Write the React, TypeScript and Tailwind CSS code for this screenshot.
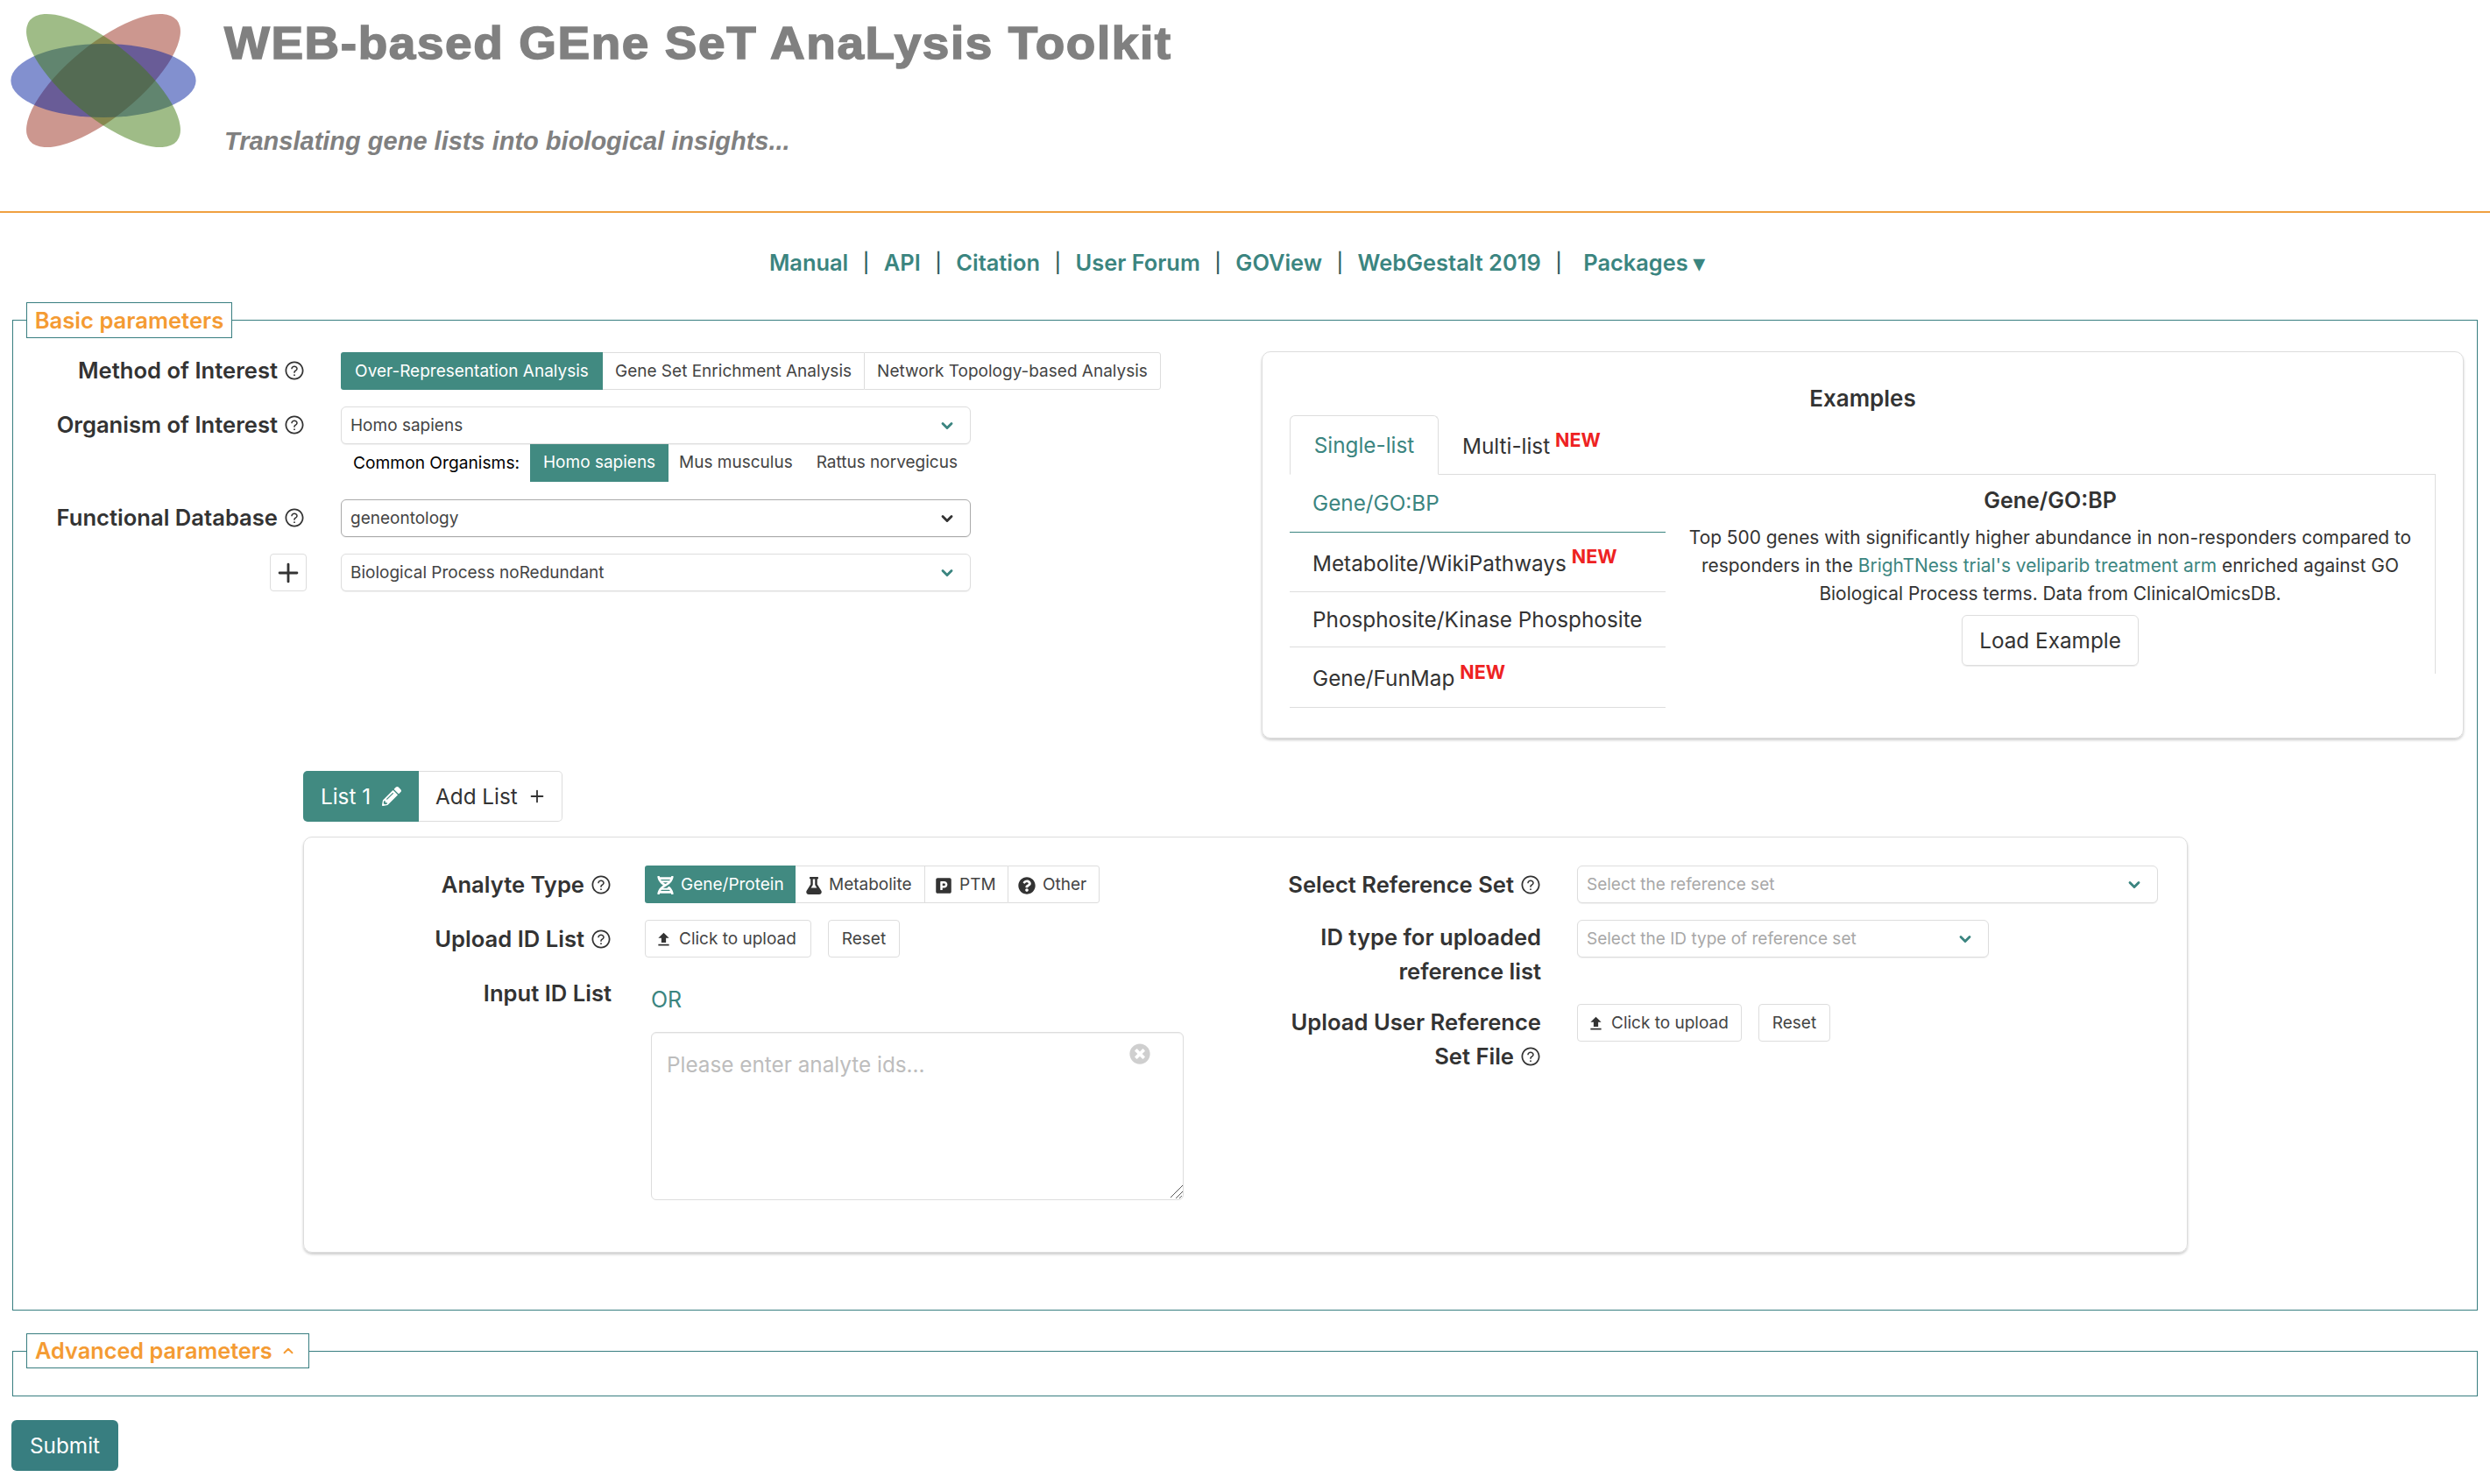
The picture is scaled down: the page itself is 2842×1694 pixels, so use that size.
import React from 'react';
import { ChevronDown, ChevronUp, Plus } from 'lucide-react';
import { AiOutlineQuestionCircle } from 'react-icons/ai';
import { FaDna, FaFlask, FaParking, FaQuestionCircle, FaPencilAlt, FaTimesCircle } from 'react-icons/fa';
import { MdFileUpload } from 'react-icons/md';

const Help = () => <AiOutlineQuestionCircle className="inline-block shrink-0 w-[24px] h-[24px] text-[#333] ml-[7px]" />;

const New = () => <sup className="text-[21.5px] font-bold text-[#ee2222] ml-[6px] relative top-[-7px] leading-none align-baseline">NEW</sup>;

const Select = ({ text, className, placeholder, dark }: { text: string; className: string; placeholder?: boolean; dark?: boolean }) => (
  <div className={`h-[43px] flex items-center justify-between pl-[10px] pr-[16px] bg-white border rounded-[6px] text-[19px] shadow-[0_1px_1px_rgba(0,0,0,0.06)] ${dark ? 'border-[#aaaaaa]' : 'border-[#dddddd]'} ${placeholder ? 'text-[#a8a8a8]' : 'text-[#444]'} ${className}`}>
    <span className="pt-[2px]">{text}</span>
    <ChevronDown size={20} strokeWidth={3.4} className={dark ? 'text-[#333]' : 'text-[#3b8580]'} />
  </div>
);

const UploadRow = ({ clickWidth }: { clickWidth: string }) => (
  <div className="flex gap-[19px]">
    <button className={`h-[43px] ${clickWidth} pt-[2px] pl-[10px] flex items-center gap-[7px] border border-[#dddddd] rounded-[4px] text-[19px] text-[#444]`}>
      <MdFileUpload size={21} className="text-[#333]" />
      Click to upload
    </button>
    <button className="h-[43px] w-[82px] pt-[2px] border border-[#dddddd] rounded-[4px] text-[19px] text-[#444]">Reset</button>
  </div>
);

const FormLabel = ({ children, className }: { children: React.ReactNode; className: string }) => (
  <div className={`text-[25.6px] font-semibold text-[#333] text-right leading-[39px] ${className}`}>{children}</div>
);

const Logo = () => (
  <svg width="240" height="190" viewBox="0 0 240 190" className="shrink-0">
    <ellipse cx="118" cy="92" rx="108.6" ry="41.5" transform="rotate(-39.4 118 92)" fill="#9a3020" fillOpacity="0.5" />
    <ellipse cx="118" cy="92" rx="105.6" ry="42" fill="#0522a0" fillOpacity="0.5" />
    <ellipse cx="118" cy="92" rx="108.6" ry="41.5" transform="rotate(39.4 118 92)" fill="#3f7a10" fillOpacity="0.5" />
  </svg>
);

const NAV = ['Manual', 'API', 'Citation', 'User Forum', 'GOView', 'WebGestalt 2019'];

const MENU: { name: string; isNew?: boolean; h: string }[] = [
  { name: 'Gene/GO:BP', h: 'h-[66px]' },
  { name: 'Metabolite/WikiPathways', isNew: true, h: 'h-[68px]' },
  { name: 'Phosphosite/Kinase Phosphosite', h: 'h-[63px]' },
  { name: 'Gene/FunMap', isNew: true, h: 'h-[69px]' },
];

export default function App() {
  return (
    <div className="w-[2842px] min-h-[1694px] bg-white text-[#333]" style={{ fontFamily: 'Inter, "Noto Sans", sans-serif' }}>
      <header className="h-[243px] flex items-start border-b-2 border-[#f0a040] overflow-hidden">
        <Logo />
        <div className="ml-[16px] text-[#808080]" style={{ fontFamily: '"Liberation Sans", Arial, sans-serif' }}>
          <h1 className="text-[52px] font-bold leading-[60px] mt-[19px] tracking-[1.5px] origin-left scale-x-[1.056] whitespace-nowrap [-webkit-text-stroke:1.5px_#808080]">WEB-based GEne SeT AnaLysis Toolkit</h1>
          <p className="text-[29px] font-bold italic leading-[34px] mt-[65px]">Translating gene lists into biological insights...</p>
        </div>
      </header>

      <nav className="h-[102px] pt-[12px] pr-[18px] flex items-center justify-center gap-[16.5px] text-[25.4px] font-semibold text-[#3b8580]">
        {NAV.map((n) => (
          <React.Fragment key={n}>
            <a>{n}</a>
            <span className="text-[22px] text-[#2f5f5f] font-medium">|</span>
          </React.Fragment>
        ))}
        <a className="ml-[8px]">Packages ▾</a>
      </nav>

      <fieldset className="mx-[14px] border border-[#387e80] pb-[65px]">
        <legend className="ml-[15px] h-[41px] w-[235px] border border-[#387e80] flex items-center justify-center text-[25.6px] font-semibold text-[#f49b33] leading-none">Basic parameters</legend>

        <div className="flex mt-[16px]">
          <div className="flex-1">
            <div className="flex">
              <FormLabel className="w-[333px] flex items-center justify-end h-[43px] pb-[2px]">Method of Interest<Help /></FormLabel>
              <div className="ml-[41px] flex h-[43px] text-[19px]">
                <div className="w-[299px] pt-[2px] bg-[#418a81] text-white flex items-center justify-center rounded-l-[3px]">Over-Representation Analysis</div>
                <div className="w-[298px] pt-[2px] border-y border-[#dddddd] text-[#444] flex items-center justify-center">Gene Set Enrichment Analysis</div>
                <div className="w-[339px] pt-[2px] border border-[#dddddd] text-[#444] flex items-center justify-center rounded-r-[3px]">Network Topology-based Analysis</div>
              </div>
            </div>

            <div className="flex mt-[19px]">
              <FormLabel className="w-[333px] flex items-center justify-end h-[43px] pb-[2px]">Organism of Interest<Help /></FormLabel>
              <div className="ml-[41px]">
                <Select text="Homo sapiens" className="w-[719px]" />
                <div className="flex items-center h-[43px] text-[19px]">
                  <span className="ml-[14px] text-[19.2px] text-black">Common Organisms:</span>
                  <span className="ml-[12px] w-[158px] h-full bg-[#418a81] text-white flex items-center justify-center">Homo sapiens</span>
                  <span className="ml-[12px] text-[#444]">Mus musculus</span>
                  <span className="ml-[27px] text-[#444]">Rattus norvegicus</span>
                </div>
              </div>
            </div>

            <div className="flex mt-[20px]">
              <FormLabel className="w-[333px] flex items-center justify-end h-[43px] pb-[2px]">Functional Database<Help /></FormLabel>
              <Select dark text="geneontology" className="ml-[41px] w-[719px]" />
            </div>

            <div className="flex mt-[19px]">
              <div className="w-[333px] flex justify-end">
                <button className="w-[42px] h-[43px] -mr-[2px] border border-[#dddddd] rounded-[4px] flex items-center justify-center">
                  <Plus size={34} strokeWidth={2} className="text-[#333]" />
                </button>
              </div>
              <Select text="Biological Process noRedundant" className="ml-[41px] w-[719px]" />
            </div>
          </div>

          <div className="w-[1372px] h-[442px] mr-[15px] -mt-px border border-[#dddddd] rounded-[10px] shadow-[0_2px_3px_rgba(0,0,0,0.2)] px-[31px]">
            <div className="h-[72px] flex items-end justify-center text-[26px] font-semibold text-[#333]">Examples</div>
            <div className="flex h-[68px] border-b border-[#dddddd] text-[24.3px]">
              <div className="w-[170px] h-[68px] border border-[#dddddd] border-b-white rounded-t-[6px] bg-white flex items-center justify-center text-[#3b8580]">Single-list</div>
              <div className="ml-[27px] flex items-center pt-[4px] text-[#333]">Multi-list<New /></div>
            </div>
            <div className="flex items-start">
              <div className="w-[429px] shrink-0">
                {MENU.map((m, i) => (
                  <div key={m.name} className={`${m.h} flex items-center pl-[26px] text-[24.3px] border-b ${i === 0 ? 'border-[#3b8580] text-[#3b8580]' : 'border-[#dddddd] text-[#333]'} ${m.isNew ? 'pt-[3px]' : ''}`}>
                    {m.name}
                    {m.isNew && <New />}
                  </div>
                ))}
              </div>
              <div className="flex-1 h-[227px] border-r border-[#dddddd] text-center px-[24px]">
                <div className="text-[25px] font-semibold text-[#333] mt-[12px] leading-[34px]">Gene/GO:BP</div>
                <p className="text-[20.9px] leading-[32px] text-[#333] mt-[10px]">
                  Top 500 genes with significantly higher abundance in non-responders compared to responders in the{' '}
                  <a className="text-[#3b8580]">BrighTNess trial's veliparib treatment arm</a> enriched against GO Biological Process terms. Data from ClinicalOmicsDB.
                </p>
                <button className="mt-[8px] w-[202px] h-[58px] border border-[#dddddd] rounded-[6px] text-[24.3px] text-[#333] shadow-[0_1px_1px_rgba(0,0,0,0.08)]">Load Example</button>
              </div>
            </div>
          </div>
        </div>

        <div className="ml-[331px] mr-[330px] mt-[37px]">
          <div className="flex h-[58px] text-[24.3px]">
            <div className="w-[132px] bg-[#418a81] text-white rounded-l-[5px] flex items-center pl-[20px] gap-[13px]">List 1 <FaPencilAlt size={22} /></div>
            <div className="w-[164px] border border-l-0 border-[#dddddd] rounded-r-[5px] flex items-center pl-[19px] gap-[11px] text-[#333]">Add List <Plus size={22} strokeWidth={2} /></div>
          </div>

          <div className="mt-[17px] h-[475px] border border-[#dddddd] rounded-[10px] shadow-[0_2px_3px_rgba(0,0,0,0.2)] flex pt-[32px]">
            <div className="w-[1125px] shrink-0 flex">
              <div className="w-[351px] shrink-0">
                <FormLabel className="h-[43px] flex items-center justify-end">Analyte Type<Help /></FormLabel>
                <FormLabel className="h-[43px] mt-[19px] flex items-center justify-end">Upload ID List<Help /></FormLabel>
                <FormLabel className="mt-[21px]">Input ID List</FormLabel>
              </div>
              <div className="ml-[38px]">
                <div className="flex h-[43px] text-[19px]">
                  <div className="w-[172px] pt-[2px] pl-[13px] bg-[#418a81] text-white flex items-center gap-[7px] rounded-l-[3px]"><FaDna size={21} />Gene/Protein</div>
                  <div className="w-[147px] pt-[2px] pl-[11px] border-y border-[#dddddd] text-[#444] flex items-center gap-[7px]"><FaFlask size={20} className="text-[#333]" />Metabolite</div>
                  <div className="w-[95px] pt-[2px] pl-[11px] border-y border-l border-[#dddddd] text-[#444] flex items-center gap-[8px]"><FaParking size={20} className="text-[#333]" />PTM</div>
                  <div className="w-[105px] pt-[2px] pl-[11px] border border-[#dddddd] text-[#444] flex items-center gap-[8px] rounded-r-[3px]"><FaQuestionCircle size={20} className="text-[#333]" />Other</div>
                </div>
                <div className="mt-[19px]"><UploadRow clickWidth="w-[190px]" /></div>
                <div className="mt-[31px] ml-[7px] text-[25px] leading-[34px] text-[#3b8580]">OR</div>
                <div className="relative mt-[20px] ml-[7px] w-[608px] h-[192px]">
                  <textarea placeholder="Please enter analyte ids..." className="w-full h-full border border-[#dddddd] rounded-[6px] px-[17px] py-[18px] text-[24.3px] placeholder:text-[#bdbdbd] outline-none shadow-[inset_0_1px_1px_rgba(0,0,0,0.06)]" />
                  <FaTimesCircle size={24} className="absolute right-[38px] top-[13px] text-[#cfcfcf]" />
                  <svg width="14" height="14" viewBox="0 0 14 14" className="absolute right-[1px] bottom-[3px] pointer-events-none text-[#555]">
                    <path d="M0 14 L14 0 M7 14 L14 7" stroke="currentColor" strokeWidth="1" fill="none" />
                  </svg>
                </div>
              </div>
            </div>

            <div className="flex-1 flex">
              <div className="w-[287px] shrink-0">
                <FormLabel className="h-[43px] flex items-center justify-end whitespace-nowrap">Select Reference Set<Help /></FormLabel>
                <FormLabel className="mt-[19px]">ID type for uploaded<br />reference list</FormLabel>
                <FormLabel className="mt-[19px] whitespace-nowrap">Upload User Reference<br /><span className="inline-flex items-center">Set File<Help /></span></FormLabel>
              </div>
              <div className="ml-[41px]">
                <Select placeholder text="Select the reference set" className="w-[663px]" />
                <Select placeholder text="Select the ID type of reference set" className="w-[470px] mt-[19px]" />
                <div className="mt-[53px]"><UploadRow clickWidth="w-[188px]" /></div>
              </div>
            </div>
          </div>
        </div>
      </fieldset>

      <fieldset className="mx-[14px] mt-[26px] h-[72px] border border-[#387e80]">
        <legend className="ml-[15px] h-[40px] w-[323px] pl-[9px] border border-[#387e80] flex items-center gap-[9px] text-[25.3px] font-semibold text-[#f49b33] leading-none">
          Advanced parameters <ChevronUp size={18} strokeWidth={2.5} />
        </legend>
      </fieldset>

      <button className="block ml-[13px] mt-[27px] w-[122px] h-[58px] bg-[#387e80] rounded-[6px] text-[24.3px] text-white">Submit</button>
    </div>
  );
}
